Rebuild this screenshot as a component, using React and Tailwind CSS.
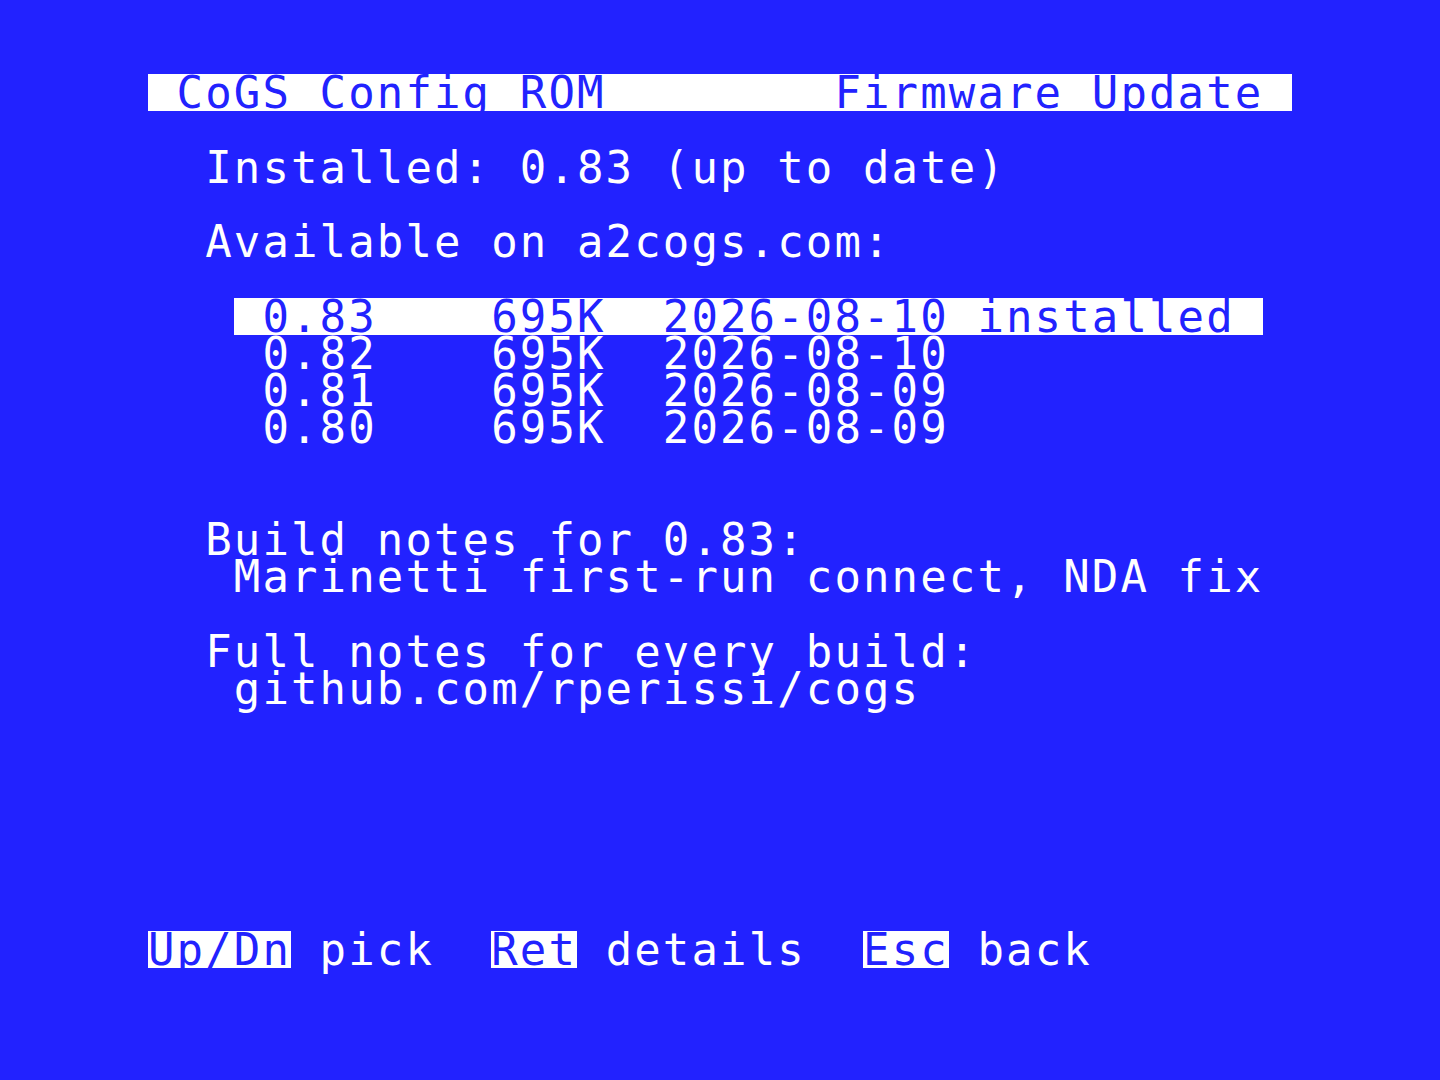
import React from 'react';

// 40x24 text screen, Apple II style
const rows = [
  [[' CoGS Config ROM        Firmware Update ', true]],
  [],
  [['  Installed: 0.83 (up to date)']],
  [],
  [['  Available on a2cogs.com:']],
  [],
  [['   '], [' 0.83    695K  2026-08-10 installed ', true]],
  [['    0.82    695K  2026-08-10']],
  [['    0.81    695K  2026-08-09']],
  [['    0.80    695K  2026-08-09']],
  [],
  [],
  [['  Build notes for 0.83:']],
  [['   Marinetti first-run connect, NDA fix']],
  [],
  [['  Full notes for every build:']],
  [['   github.com/rperissi/cogs']],
  [], [], [], [], [], [],
  [['Up/Dn', true], [' pick  '], ['Ret', true], [' details  '], ['Esc', true], [' back']],
];

export default function App() {
  return (
    <div className="w-full h-[1080px] bg-[#2222ff] flex justify-center overflow-hidden">
      <div
        className="w-[1144px] mt-[74px] text-white text-[44px] tracking-[2.11px]"
        style={{ fontFamily: '"DejaVu Sans Mono", "Liberation Mono", monospace' }}
      >
        {rows.map((segs, i) => (
          <div key={i} className="h-[37.27px] leading-[37.27px] whitespace-pre">
            {segs.map(([txt, inv], j) => (
              <span
                key={j}
                className={inv ? 'inline-block h-[37.27px] align-top bg-white text-[#2222ff]' : 'inline-block h-[37.27px] align-top'}
              >
                {txt}
              </span>
            ))}
          </div>
        ))}
      </div>
    </div>
  );
}
